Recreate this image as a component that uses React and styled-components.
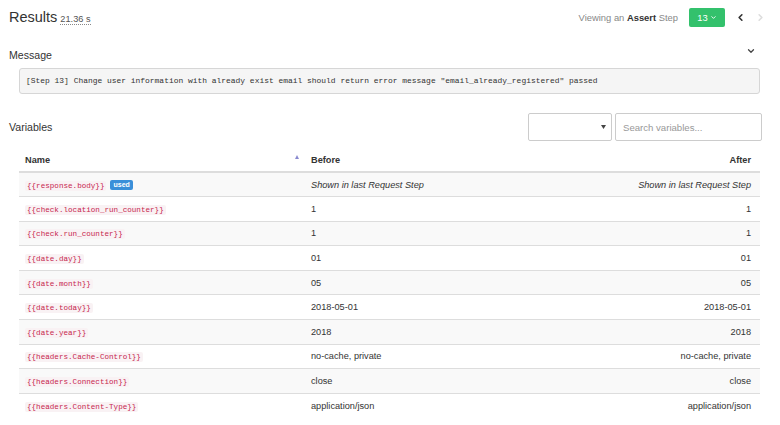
import React from 'react';
import styled, { createGlobalStyle } from 'styled-components';
import { ChevronDown, ChevronLeft, ChevronRight } from 'lucide-react';

const GlobalStyle = createGlobalStyle`
  body {
    margin: 0;
    background: #fff;
    font-family: "Liberation Sans", Arial, sans-serif;
    color: #333;
  }
`;

const Page = styled.div`
  width: 780px;
  height: 425px;
  overflow: hidden;
  box-sizing: border-box;
  padding: 7px 17px 0 9px;
`;

const TopBar = styled.div`
  display: flex;
  align-items: center;
  justify-content: space-between;
  height: 20px;
  margin-right: -3px;
`;

const Title = styled.h1`
  margin: 0;
  font-size: 14.5px;
  font-weight: normal;
  color: #333;
  display: flex;
  align-items: baseline;
`;

const Duration = styled.abbr`
  margin-left: 3px;
  font-size: 9.2px;
  color: #555;
  text-decoration: none;
  border-bottom: 1px dotted #888;
  line-height: 10px;
`;

const StepNav = styled.div`
  display: flex;
  align-items: center;
`;

const Viewing = styled.span`
  font-size: 9.4px;
  color: #888;
  margin-right: 11px;
  b {
    color: #333;
  }
`;

const StepButton = styled.button`
  width: 36px;
  height: 19px;
  border: none;
  border-radius: 2px;
  background: #33c16c;
  color: #fff;
  font-family: inherit;
  font-size: 9.4px;
  padding: 0;
  display: flex;
  align-items: center;
  justify-content: center;
  gap: 2px;
`;

const Arrow = styled.span`
  display: flex;
  margin-left: ${p => p.$gap}px;
  color: ${p => (p.$disabled ? '#ddd' : '#333')};
`;

const SectionHead = styled.div`
  display: flex;
  align-items: center;
  justify-content: space-between;
  height: 14px;
  margin-top: ${p => p.$top}px;
`;

const Label = styled.h2`
  margin: 0;
  font-size: 10.6px;
  font-weight: normal;
  color: #333;
`;

const Collapse = styled.span`
  display: flex;
  margin-right: 7px;
  margin-top: -9px;
  color: #444;
`;

const MessageBox = styled.pre`
  margin: 6px 3px 0 10px;
  height: 26px;
  box-sizing: border-box;
  padding: 0 6px;
  line-height: 24px;
  background: #f5f5f5;
  border: 1px solid #d6d6d6;
  border-radius: 3px;
  font-family: "Liberation Mono", "DejaVu Sans Mono", monospace;
  font-size: 7.95px;
  color: #333;
  white-space: nowrap;
`;

const VarBar = styled.div`
  display: flex;
  align-items: center;
  justify-content: space-between;
  margin-top: 19px;
  height: 28px;
`;

const Filters = styled.div`
  display: flex;
  gap: 3px;
  margin-right: 1px;
`;

const Select = styled.div`
  width: 84px;
  height: 28px;
  box-sizing: border-box;
  border: 1px solid #ccc;
  border-radius: 2px;
  display: flex;
  align-items: center;
  justify-content: flex-end;
  padding-right: 5px;
`;

const Search = styled.input`
  width: 147px;
  height: 28px;
  box-sizing: border-box;
  border: 1px solid #ccc;
  border-radius: 2px;
  padding: 0 7px;
  font-family: inherit;
  font-size: 9.6px;
  color: #333;
  outline: none;
  &::placeholder {
    color: #999;
  }
`;

const Table = styled.table`
  margin: 7px 0 0 10px;
  width: 741px;
  border-collapse: collapse;
  font-size: 9.2px;
  table-layout: fixed;
`;

const Th = styled.th`
  text-align: ${p => p.$align || 'left'};
  font-weight: bold;
  padding: 0 ${p => (p.$align === 'right' ? 9 : 6)}px 0 6px;
  height: 23px;
  border-bottom: 2px solid #ddd;
  color: #333;
`;

const ThInner = styled.div`
  display: flex;
  align-items: center;
  justify-content: space-between;
`;

const SortUp = styled.span`
  width: 0;
  height: 0;
  border-left: 2.5px solid transparent;
  border-right: 2.5px solid transparent;
  border-bottom: 4px solid #8a8ad0;
  margin-right: 0;
  margin-top: -5px;
`;

const Row = styled.tr`
  height: 24.6px;
  background: ${p => (p.$striped ? '#f9f9f9' : '#fff')};
`;

const Td = styled.td`
  box-sizing: border-box;
  height: 24.6px;
  padding: 0 ${p => (p.$align === 'right' ? 9 : 6)}px 0 6px;
  line-height: 12px;
  vertical-align: middle;
  border-top: 1px solid #ddd;
  text-align: ${p => p.$align || 'left'};
  font-style: ${p => (p.$italic ? 'italic' : 'normal')};
  color: #333;
  white-space: nowrap;
`;

const Code = styled.code`
  font-family: "Liberation Mono", "DejaVu Sans Mono", monospace;
  font-size: 7.6px;
  line-height: 10px;
  color: #c7254e;
  background: #f9f2f4;
  padding: 1px 2px;
  border-radius: 2px;
`;

const Badge = styled.span`
  display: inline-block;
  margin-left: 4px;
  padding: 0 3px;
  height: 10px;
  line-height: 10px;
  border-radius: 2px;
  background: #3a8fd9;
  color: #fff;
  font-size: 7px;
  font-weight: bold;
  vertical-align: 1px;
`;

const variables = [
  { name: 'response.body', used: true, before: 'Shown in last Request Step', after: 'Shown in last Request Step', italic: true },
  { name: 'check.location_run_counter', before: '1', after: '1' },
  { name: 'check.run_counter', before: '1', after: '1' },
  { name: 'date.day', before: '01', after: '01' },
  { name: 'date.month', before: '05', after: '05' },
  { name: 'date.today', before: '2018-05-01', after: '2018-05-01' },
  { name: 'date.year', before: '2018', after: '2018' },
  { name: 'headers.Cache-Control', before: 'no-cache, private', after: 'no-cache, private' },
  { name: 'headers.Connection', before: 'close', after: 'close' },
  { name: 'headers.Content-Type', before: 'application/json', after: 'application/json' },
];

export default function App() {
  return (
    <Page>
      <GlobalStyle />
      <TopBar>
        <Title>
          Results<Duration title="duration">21.36 s</Duration>
        </Title>
        <StepNav>
          <Viewing>Viewing an <b>Assert</b> Step</Viewing>
          <StepButton>
            13 <ChevronDown size={7} strokeWidth={3} />
          </StepButton>
          <Arrow $gap={10}><ChevronLeft size={11} strokeWidth={3.5} /></Arrow>
          <Arrow $gap={9} $disabled><ChevronRight size={11} strokeWidth={3.5} /></Arrow>
        </StepNav>
      </TopBar>

      <SectionHead $top={21}>
        <Label>Message</Label>
        <Collapse><ChevronDown size={10} strokeWidth={3} /></Collapse>
      </SectionHead>
      <MessageBox>[Step 13] Change user information with already exist email should return error message "email_already_registered" passed</MessageBox>

      <VarBar>
        <Label>Variables</Label>
        <Filters>
          <Select>
            <svg width="5" height="4" viewBox="0 0 5 4"><path d="M0 0h5L2.5 4z" fill="#444" /></svg>
          </Select>
          <Search placeholder="Search variables..." />
        </Filters>
      </VarBar>

      <Table>
        <colgroup>
          <col style={{ width: 286 }} />
          <col style={{ width: 230 }} />
          <col />
        </colgroup>
        <thead>
          <tr>
            <Th>
              <ThInner>Name<SortUp /></ThInner>
            </Th>
            <Th>Before</Th>
            <Th $align="right">After</Th>
          </tr>
        </thead>
        <tbody>
          {variables.map((v, i) => (
            <Row key={v.name} $striped={i % 2 === 0}>
              <Td>
                <Code>{`{{${v.name}}}`}</Code>
                {v.used && <Badge>used</Badge>}
              </Td>
              <Td $italic={v.italic}>{v.before}</Td>
              <Td $align="right" $italic={v.italic}>{v.after}</Td>
            </Row>
          ))}
        </tbody>
      </Table>
    </Page>
  );
}
